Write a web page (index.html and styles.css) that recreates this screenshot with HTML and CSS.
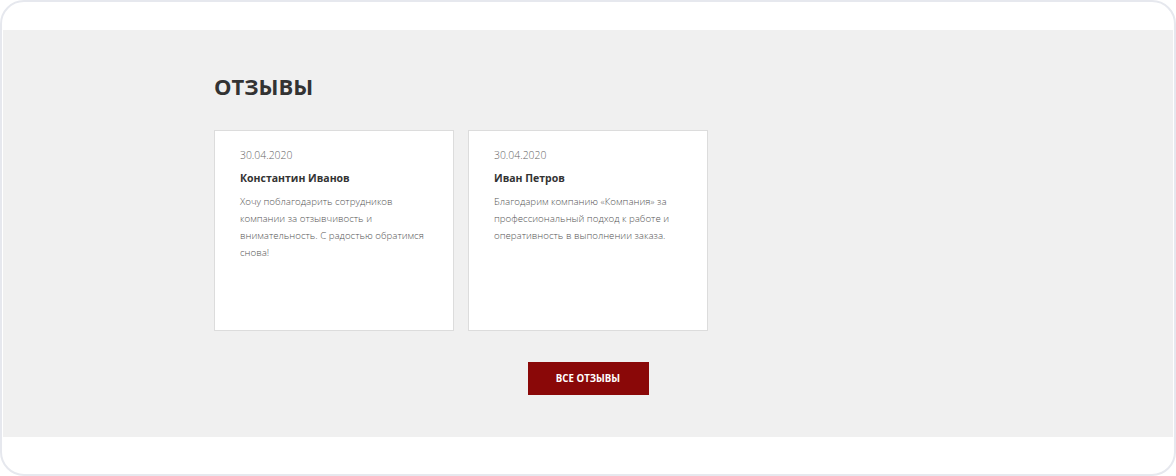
FILE: index.html
```html
<!DOCTYPE html>
<html lang="ru">
<head>
<meta charset="utf-8">
<title>Отзывы</title>
<link rel="stylesheet" href="styles.css">
</head>
<body>
<div class="frame">
  <section class="reviews">
    <div class="container">
      <h2 class="title">ОТЗЫВЫ</h2>
      <div class="cards">
        <article class="card">
          <div class="date">30.04.2020</div>
          <div class="name">Константин Иванов</div>
          <p class="text">Хочу поблагодарить сотрудников компании за отзывчивость и внимательность. С радостью обратимся снова!</p>
        </article>
        <article class="card">
          <div class="date">30.04.2020</div>
          <div class="name">Иван Петров</div>
          <p class="text">Благодарим компанию «Компания» за профессиональный подход к работе и оперативность в выполнении заказа.</p>
        </article>
      </div>
      <div class="actions">
        <a class="btn" href="#">ВСЕ ОТЗЫВЫ</a>
      </div>
    </div>
  </section>
</div>
</body>
</html>
```

FILE: styles.css
```css
* { box-sizing: border-box; }
html, body { margin: 0; padding: 0; background: #fff; }
body { font-family: "Open Sans", "Liberation Sans", sans-serif; color: #333; }

.frame {
  width: 1176px;
  height: 476px;
  border: 2px solid #e6e8ee;
  border-radius: 24px;
  padding-top: 28px;
  overflow: hidden;
  background: #fff;
}

.reviews {
  background: #f0f0f0;
  height: 407px;
  padding-top: 41px;
  margin: 0 1px;
}

.container {
  width: 748px;
  margin: 0 auto;
}

.title {
  margin: 0;
  font-size: 22px;
  line-height: 30px;
  font-weight: 700;
  color: #333;
}

.cards {
  display: flex;
  gap: 14px;
  margin-top: 29px;
}

.card {
  width: 240px;
  height: 201px;
  background: #fff;
  border: 1px solid #dcdcdc;
  padding: 17px 20px 0 25px;
}

.date {
  font-size: 10.4px;
  line-height: 14px;
  font-weight: 300;
  color: #666;
}

.name {
  margin-top: 7px;
  font-size: 10.5px;
  line-height: 18px;
  font-weight: 700;
  color: #333;
}

.text {
  margin: 6px 0 0;
  font-size: 9.7px;
  line-height: 17px;
  font-weight: 300;
  color: #555;
}

.actions {
  display: flex;
  justify-content: center;
  margin-top: 31px;
}

.btn {
  display: flex;
  align-items: center;
  justify-content: center;
  width: 121px;
  height: 33px;
  background: #8a0808;
  color: #fff;
  font-size: 9.7px;
  font-weight: 700;
  text-decoration: none;
}
```
